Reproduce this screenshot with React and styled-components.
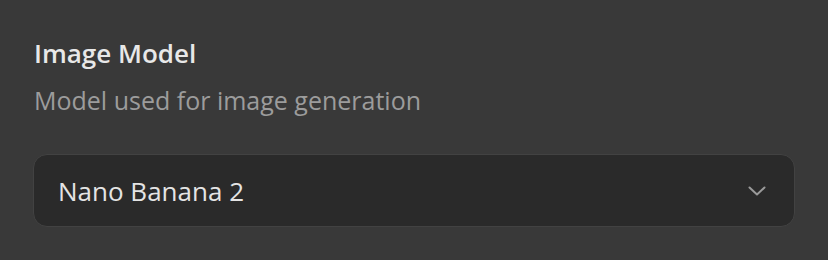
import React from "react";
import styled, { createGlobalStyle } from "styled-components";

const Global = createGlobalStyle`
  html, body { margin: 0; padding: 0; background: #393939; }
  body { font-family: "Open Sans", "Noto Sans", sans-serif; -webkit-font-smoothing: antialiased; }
`;

const Panel = styled.div`
  width: 828px;
  height: 260px;
  box-sizing: border-box;
  padding: 36px 33px 0 34px;
  background: #393939;
  display: flex;
  flex-direction: column;
`;

const Title = styled.div`
  font-size: 26px;
  font-weight: 600;
  color: #e8e8e8;
  line-height: 34px;
`;

const Description = styled.div`
  font-size: 25px;
  color: #9c9c9c;
  line-height: 36px;
  margin-top: 12px;
`;

const Select = styled.button`
  margin-top: 36px;
  margin-left: -1px;
  width: 762px;
  height: 73px;
  box-sizing: border-box;
  display: flex;
  align-items: center;
  justify-content: space-between;
  padding: 0 28px 0 24px;
  background: #2a2a2a;
  border: 1px solid #424242;
  border-radius: 14px;
  font-family: inherit;
  font-size: 26px;
  color: #e4e4e4;
  cursor: pointer;
`;

const Chevron = () => (
  <svg width="18" height="10" viewBox="0 0 18 10" fill="none">
    <path d="M1.5 1.5 L9 8.5 L16.5 1.5" stroke="#9a9a9a" strokeWidth="2" strokeLinecap="round" strokeLinejoin="round" />
  </svg>
);

export default function App() {
  return (
    <>
      <Global />
      <Panel>
        <Title>Image Model</Title>
        <Description>Model used for image generation</Description>
        <Select>
          <span>Nano Banana 2</span>
          <Chevron />
        </Select>
      </Panel>
    </>
  );
}
